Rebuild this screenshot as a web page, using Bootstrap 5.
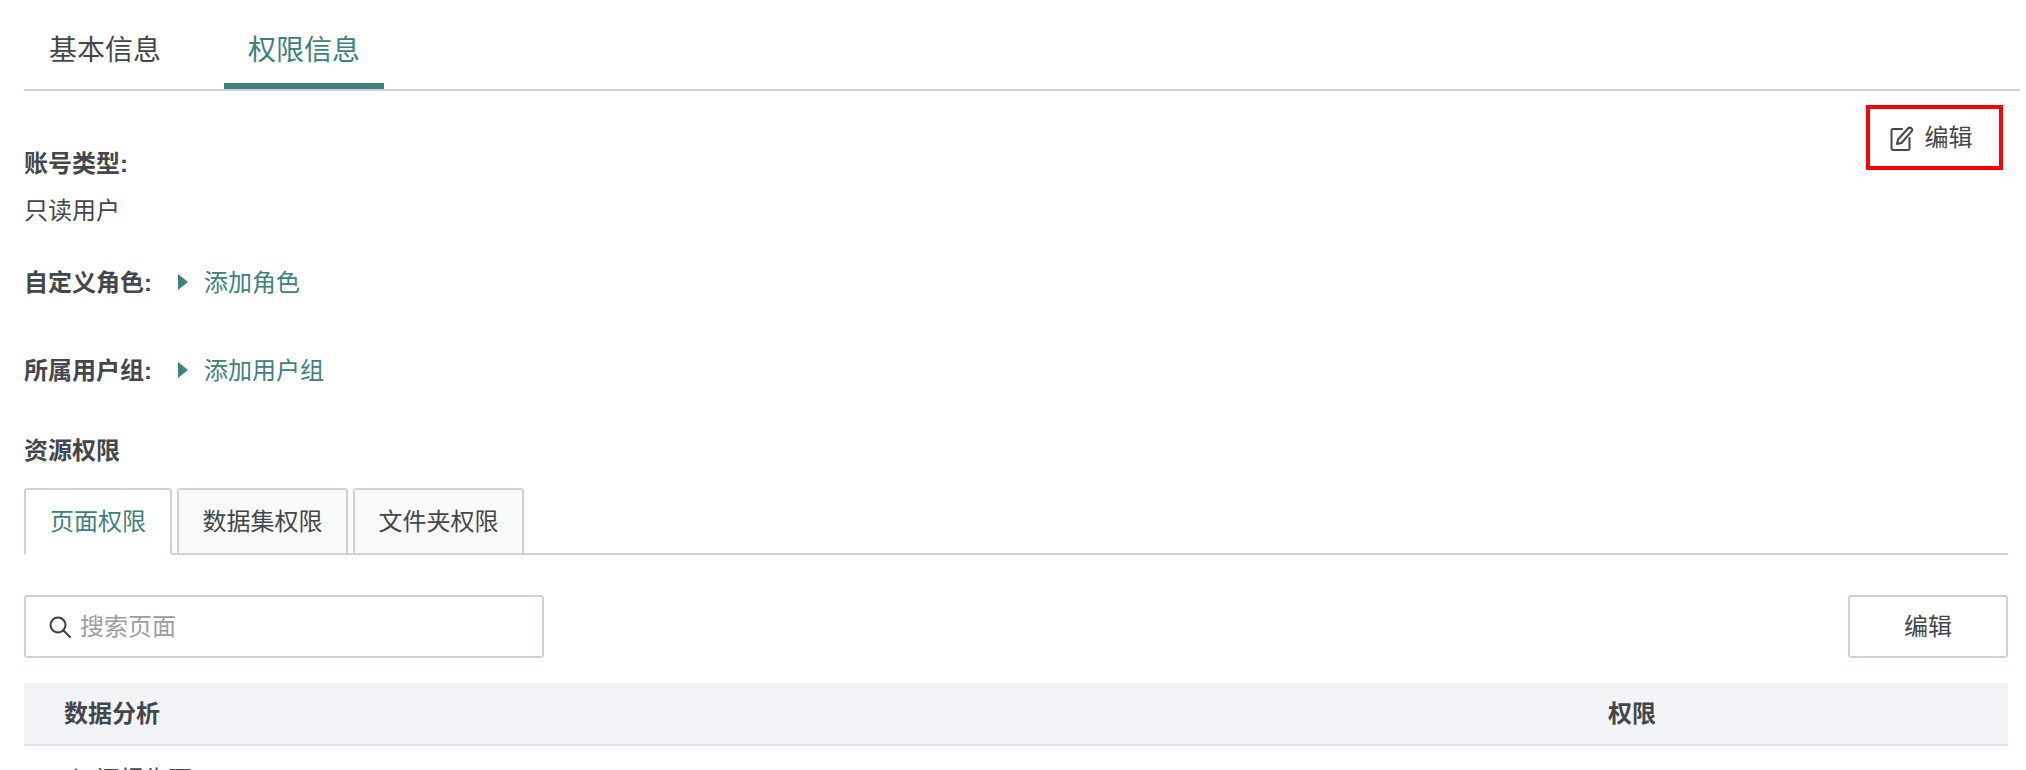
<!DOCTYPE html>
<html lang="zh-CN">
<head>
    <meta charset="UTF-8">
    <title>权限信息</title>
    <link href="https://cdn.jsdelivr.net/npm/bootstrap@5.3.0/dist/css/bootstrap.min.css" rel="stylesheet">
    <style>
        html, body { height: 770px; overflow: hidden; }
        body { font-family: "Liberation Sans", "Noto Sans CJK SC", sans-serif; color: #43474b; background: #fff; }
        .page-wrap { padding: 0 6px 0 24px; }
        .top-tabs { height: 91px; border-bottom: 2px solid #ccd3d7; font-size: 28px; margin-bottom: 14px; }
        .top-tab { height: 89px; padding: 31px 25px 0; line-height: 40px; color: #43474b; text-decoration: none; }
        .top-tab.is-active { color: #3e807e; border-bottom: 6px solid #3e807e; width: 160px; margin-left: 38px; text-align: center; padding-left: 0; padding-right: 0; }
        .edit-box { width: 137px; height: 65px; border: 4px solid #f00; margin-right: 17px; padding-right: 7px; font-size: 24px; gap: 11px; }
        .info-top { padding-top: 43px; }
        .info-line { font-size: 24px; line-height: 32px; }
        .info-label { font-weight: 700; margin-bottom: 15px; }
        .role-line { margin-top: 40px; }
        .group-line { margin-top: 56px; }
        .res-title { margin-top: 48px; margin-bottom: 21px; }
        .add-link { color: #3e807e; font-size: 24px; text-decoration: none; }
        .add-arrow { width: 0; height: 0; border-left: 10px solid #3e807e; border-top: 8px solid transparent; border-bottom: 8px solid transparent; margin: 0 16px 2px 26px; }
        .info-line .info-label.mb-0 { margin-bottom: 0; }
        .perm-tabs { border-bottom: 2px solid #ccd3d7; margin-right: 12px; height: 67px; gap: 5px; font-size: 24px; }
        .perm-tab { height: 67px; width: 171px; border: 2px solid #ccd3d7; border-radius: 3px 3px 0 0; background: #f9f9fa; color: #43474b; }
        .perm-tab.is-active { width: 148px; background: #fff; color: #3e807e; border-bottom-color: #fff; }
        .tool-row { margin: 40px 12px 25px 0; }
        .search-box { width: 520px; height: 63px; border: 2px solid #ccd3d7; border-radius: 3px; padding-left: 23px; gap: 9px; font-size: 24px; color: #9a9ea3; }
        .edit-btn { width: 160px; height: 63px; border: 2px solid #ccd3d7; border-radius: 3px; background: #fff; color: #43474b; font-size: 24px; padding: 0; }
        .perm-head { background: #f2f3f6; border-bottom: 2px solid #e0e2e6; height: 63px; margin-right: 12px; padding-left: 40px; font-size: 24px; font-weight: 700; }
        .perm-col { width: 400px; }
        .perm-row { padding: 18px 0 0 48px; font-size: 24px; line-height: 32px; }
    </style>
</head>
<body>
    <div class="page-wrap">
        <!-- 顶部标签 -->
        <div class="top-tabs d-flex">
            <a class="top-tab" href="#">基本信息</a>
            <a class="top-tab is-active" href="#">权限信息</a>
        </div>

        <div class="d-flex justify-content-between">
            <div class="info-line info-top">
                <div class="info-label">账号类型:</div>
                <div>只读用户</div>
            </div>
            <div class="edit-box d-flex align-items-center justify-content-center">
                <svg width="24" height="26" viewBox="0 0 24 26" fill="none" stroke="#43474b" stroke-width="2" stroke-linecap="round" stroke-linejoin="round">
                    <path d="M12 4H3a1.5 1.5 0 0 0-1.5 1.5V23.5A1.5 1.5 0 0 0 3 25h15a1.5 1.5 0 0 0 1.5-1.5V13"/>
                    <path d="M7 19l1-4.5L18.5 3a1.8 1.8 0 0 1 2.6 0l.6.6a1.8 1.8 0 0 1 0 2.6L11.5 18z"/>
                </svg>
                <span>编辑</span>
            </div>
        </div>

        <div class="info-line role-line d-flex align-items-center">
            <span class="info-label mb-0">自定义角色:</span>
            <span class="add-arrow"></span>
            <a class="add-link" href="#">添加角色</a>
        </div>
        <div class="info-line group-line d-flex align-items-center">
            <span class="info-label mb-0">所属用户组:</span>
            <span class="add-arrow"></span>
            <a class="add-link" href="#">添加用户组</a>
        </div>

        <div class="info-line info-label res-title">资源权限</div>

        <!-- 资源权限标签 -->
        <div class="perm-tabs d-flex">
            <div class="perm-tab is-active d-flex align-items-center justify-content-center">页面权限</div>
            <div class="perm-tab d-flex align-items-center justify-content-center">数据集权限</div>
            <div class="perm-tab d-flex align-items-center justify-content-center">文件夹权限</div>
        </div>

        <div class="tool-row d-flex justify-content-between">
            <div class="search-box d-flex align-items-center">
                <svg width="22" height="22" viewBox="0 0 22 22" fill="none" stroke="#3c4043" stroke-width="2" stroke-linecap="round">
                    <circle cx="9" cy="9" r="7.5"/>
                    <path d="M14.5 14.5L21 21"/>
                </svg>
                <span>搜索页面</span>
            </div>
            <button class="edit-btn btn" type="button">编辑</button>
        </div>

        <div class="perm-head d-flex align-items-center justify-content-between">
            <span>数据分析</span>
            <span class="perm-col">权限</span>
        </div>
        <div class="perm-row">订阅报告页</div>
    </div>
</body>
</html>
